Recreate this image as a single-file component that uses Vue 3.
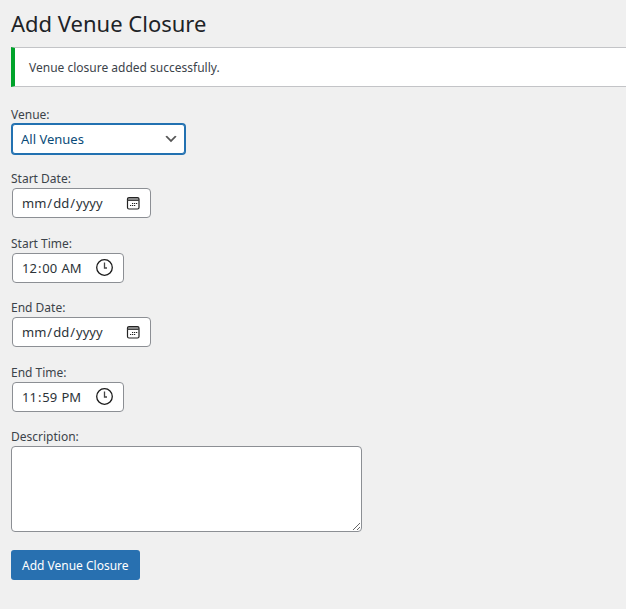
<script setup>
import { reactive, ref } from 'vue'

const form = reactive({
  venue: 'all',
  startDate: '',
  startTime: '00:00',
  endDate: '',
  endTime: '23:59',
  description: ''
})

const saved = ref(true)

const moments = [
  { id: 'startDate', label: 'Start Date:', type: 'date' },
  { id: 'startTime', label: 'Start Time:', type: 'time' },
  { id: 'endDate', label: 'End Date:', type: 'date' },
  { id: 'endTime', label: 'End Time:', type: 'time' }
]

function submit() {
  saved.value = true
}
</script>

<template>
  <main class="wrap">
    <h1>Add Venue Closure</h1>
    <div v-if="saved" class="notice" role="status">
      <p>Venue closure added successfully.</p>
    </div>

    <form @submit.prevent="submit">
      <div class="field">
        <label for="venue">Venue:</label>
        <div class="select-box">
          <select id="venue" v-model="form.venue">
            <option value="all">All Venues</option>
          </select>
          <svg class="chevron" viewBox="0 0 20 20" width="16" height="16" aria-hidden="true">
            <path d="M5 6l5 5 5-5 2 1-7 7-7-7 2-1z" fill="#555" />
          </svg>
        </div>
      </div>

      <div v-for="m in moments" :key="m.id" class="field" :class="m.type">
        <label :for="m.id">{{ m.label }}</label>
        <div class="picker">
          <input :id="m.id" v-model="form[m.id]" :type="m.type" />
          <svg v-if="m.type === 'date'" class="icon" viewBox="0 0 14 14" width="14" height="14" aria-hidden="true">
            <path d="M1 2h12v3H1z" fill="#888" />
            <rect x="1.5" y="1.5" width="11.5" height="11.5" rx="1.5" fill="none" stroke="#222" stroke-width="1.2" />
            <path d="M1.5 4.5h11.5" stroke="#444" />
            <path d="M6 7.5h1.2M8 7.5h1.2M10 7.5h1.2M4 9.5h1.2M6 9.5h1.2M8 9.5h1.2" stroke="#222" stroke-width="1.2" />
          </svg>
          <svg v-else class="icon" viewBox="0 0 18 18" width="18" height="18" aria-hidden="true">
            <circle cx="9.5" cy="8.5" r="7.8" fill="none" stroke="#1b1b1b" stroke-width="1.3" />
            <path d="M9.5 3.5v5.5H12" fill="none" stroke="#444" stroke-width="1.3" />
          </svg>
        </div>
      </div>

      <div class="field">
        <label for="description">Description:</label>
        <textarea id="description" v-model="form.description"></textarea>
      </div>

      <button type="submit">Add Venue Closure</button>
    </form>
  </main>
</template>

<style>
body {
  background: #f0f0f0;
}
</style>

<style scoped>
.wrap {
  padding: 7px 0 16px 11px;
  font-family: "Segoe UI", "Noto Sans", sans-serif;
  font-size: 12px;
  color: #3c434a;
}

h1 {
  margin: 0 0 8px;
  font-size: 22px;
  font-weight: 400;
  line-height: 32px;
  color: #1d2327;
}

.notice {
  margin-bottom: 19px;
  padding: 10px 14px 8px;
  background: #fff;
  border: 1px solid #c3c4c7;
  border-left: 4px solid #00a32a;
  border-right: 0;
}

.notice p {
  margin: 0;
  line-height: 20px;
}

.field {
  display: flex;
  flex-direction: column;
  align-items: flex-start;
  margin-bottom: 15px;
}

.field.date {
  margin-bottom: 16px;
}

label {
  padding-top: 1px;
  line-height: 18px;
}

.field:first-child label {
  padding-top: 0;
}

.select-box {
  display: grid;
  align-items: center;
  width: 173px;
  margin-left: 1px;
}

select,
.chevron {
  grid-area: 1 / 1;
}

select {
  appearance: none;
  box-sizing: border-box;
  width: 100%;
  height: 30px;
  padding: 0 24px 0 8px;
  font: inherit;
  font-size: 13px;
  color: #0a4b78;
  background: #fff;
  border: 1px solid #2271b1;
  border-radius: 3px;
  box-shadow: 0 0 0 1px #2271b1;
  outline: 0;
}

.chevron {
  justify-self: end;
  margin-right: 6px;
  pointer-events: none;
}

.picker {
  display: flex;
  align-items: center;
  justify-content: space-between;
  box-sizing: border-box;
  height: 30px;
  margin-left: 1px;
  padding: 0 10px 0 8px;
  background: #fff;
  border: 1px solid #8c8f94;
  border-radius: 4px;
}

.date .picker {
  width: 139px;
}

.time .picker {
  width: 112px;
}

.picker input {
  flex: 1;
  min-width: 0;
  padding: 0;
  font: inherit;
  font-size: 13px;
  color: #2c3338;
  background: none;
  border: 0;
  outline: 0;
}

.picker input::-webkit-calendar-picker-indicator {
  display: none;
}

.icon {
  flex: none;
  pointer-events: none;
}

textarea {
  box-sizing: border-box;
  width: 351px;
  max-width: 100%;
  height: 86px;
  padding: 2px 6px;
  font: inherit;
  font-size: 13px;
  color: #2c3338;
  background: #fff;
  border: 1px solid #8c8f94;
  border-radius: 4px;
}

button {
  display: block;
  height: 30px;
  margin-top: 18px;
  padding: 1px 11px 0;
  font: inherit;
  line-height: 28px;
  color: #fff;
  background: #2870b0;
  border: 0;
  border-radius: 3px;
  cursor: pointer;
}
</style>
